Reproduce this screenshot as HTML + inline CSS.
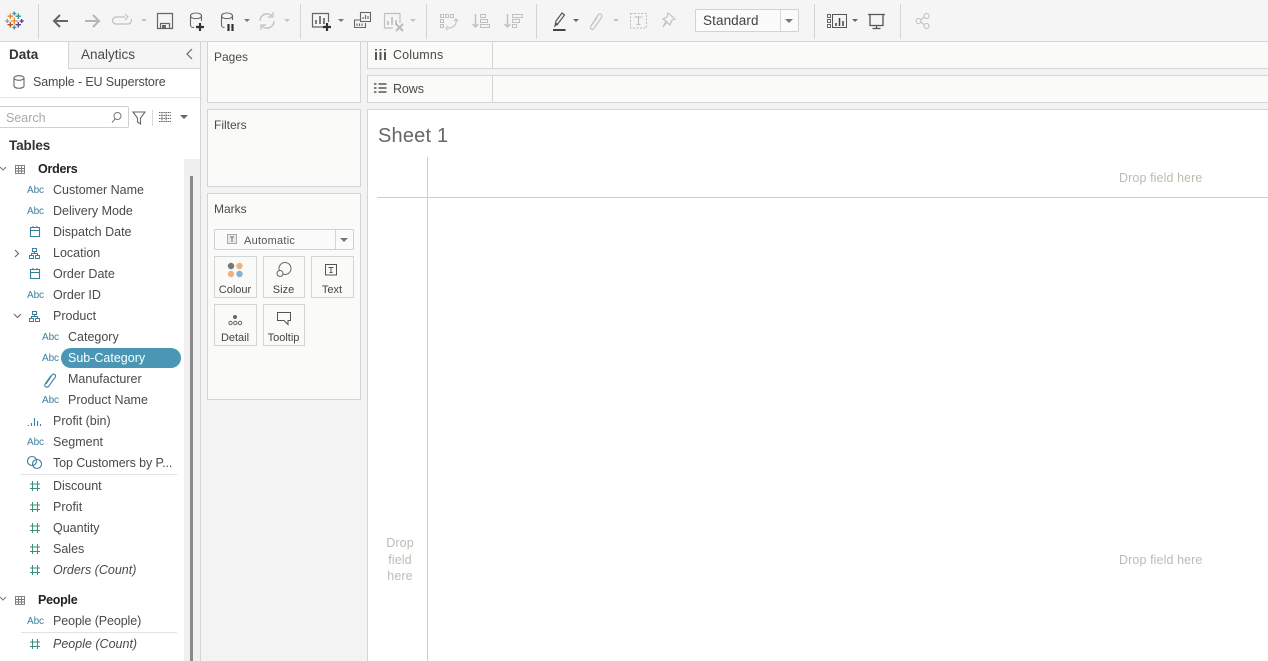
<!DOCTYPE html>
<html><head><meta charset="utf-8"><style>
html,body{margin:0;padding:0;width:1268px;height:661px;overflow:hidden;background:#f3f3f3;font-family:"Liberation Sans",sans-serif;color:#3f3f3f}
.a{position:absolute}
.t{position:absolute;font-size:12.5px;line-height:16px;white-space:nowrap;color:#4a4a4a;letter-spacing:0}
.b{font-weight:bold;color:#222;font-size:12.5px;letter-spacing:-.25px}
.abc{position:absolute;font-size:10px;line-height:12px;color:#3b7f9e;letter-spacing:-.1px;white-space:nowrap;top:0}
.p{position:absolute;background:#fafaf8;border:1px solid #d4d4d4;box-sizing:border-box}
.m{position:absolute;background:#fafaf8;border:1px solid #d4d4d4;box-sizing:border-box;width:43px;height:42px}
.m span{position:absolute;left:-1px;right:0;top:26px;text-align:center;font-size:11px;line-height:14px;color:#444}
.d{position:absolute;color:#bcbcb2;font-size:12.5px;line-height:16px;white-space:nowrap;letter-spacing:.1px}
</style></head><body>

<!-- toolbar -->
<div class="a" style="left:0;top:0;width:1268px;height:41px;background:#f5f5f5"></div>
<div class="a" style="left:0;top:41px;width:1268px;height:1px;background:#d6d6d6"></div>
<svg class="a" style="left:0;top:0" width="1268" height="41" fill="none">
<!-- logo -->
<g stroke-width="1.300">
<path d="M10.300 13.500v5.500M7.500 16.200h5.500" stroke="#e8862e"/>
<path d="M18.300 13.500v5.500M15.500 16.200h5.500" stroke="#2f9b9b"/>
<path d="M14.300 17.500v7M10.800 21h7" stroke="#e8862e"/>
<path d="M10.300 22v5.500M7.500 24.700h5.500" stroke="#b5541c"/>
<path d="M18.300 22v5.500M15.500 24.700h5.500" stroke="#5b3e8f"/>
<path d="M7.300 19v4M5.300 21h4" stroke="#8a97a8"/>
<path d="M21.700 19v4M19.700 21h4" stroke="#4a3f8f"/>
<path d="M14.300 25.500v4M12.300 27.500h4" stroke="#3d8fb0"/>
<path d="M14.300 11.500v4M12.300 13.500h4" stroke="#3d8fb0"/>
</g>
<!-- separators -->
<path d="M38.500 4v35M300.500 4v35M426.500 4v35M536.500 4v35M814.500 4v35M900.500 4v35" stroke="#d4d4d4"/>
<!-- back/forward -->
<path d="M68 21H54M60 15l-6 6 6 6" stroke="#666" stroke-width="2"/>
<path d="M85 21h14M93 15l6 6-6 6" stroke="#b5b5b5" stroke-width="2"/>
<path d="M125 17h-9a3.500 3.500 0 0 0 0 7h12a3.500 3.500 0 0 0 3-5M125 14l3 3-3 3" stroke="#c0c0c0" stroke-width="1.200"/>
<path d="M338 19h6l-3 3zM244 19h6l-3 3z" fill="#777"/>
<path d="M141 19h6l-3 3z M284 19h6l-3 3z M410 19h6l-3 3z" fill="#c4c4c4"/>
<!-- save -->
<path d="M157.500 13.500h15v15h-15zM160.500 28.500v-5h9v5" stroke="#666" stroke-width="1.200"/><rect x="162" y="25" width="4" height="3" fill="#666"/>
<!-- DS add -->
<path d="M190.500 16v9a2.500 2.500 0 0 0 2.500 2.500h1M201.500 16v5M190.500 16c0-4 11-4 11 0 0 3.500-11 3.500-11 0z" stroke="#666" stroke-width="1.100"/>
<path d="M200 23v8M196 27h8" stroke="#333" stroke-width="2.200"/>
<!-- DS pause -->
<path d="M221.500 16v9a2.500 2.500 0 0 0 2.500 2.500h.500M232.500 16v4M221.500 16c0-4 11-4 11 0 0 3.500-11 3.500-11 0z" stroke="#666" stroke-width="1.100"/>
<path d="M228.500 24v7M232.500 24v7" stroke="#333" stroke-width="2.200"/>
<!-- refresh -->
<path d="M260 21a7 7 0 0 1 12-5M274 21a7 7 0 0 1-12 5" stroke="#c0c0c0" stroke-width="1.400"/><path d="M273 12v5h-5M261 30v-5h5" stroke="#c0c0c0" stroke-width="1.200"/>
<!-- new sheet -->
<path d="M327 27h-14.500V13.500h16V22" stroke="#666" stroke-width="1.200"/><path d="M316 24v-4M320 24v-8M324 24v-6" stroke="#666" stroke-width="1.700"/>
<path d="M327 23v8M323 27h8" stroke="#333" stroke-width="2.200"/>
<!-- duplicate -->
<path d="M360 20h-5.500v7.500h11V23" stroke="#666" stroke-width="1.100"/><rect x="360.500" y="12.500" width="10" height="9" stroke="#666" stroke-width="1.100"/><path d="M363 19v-2M365.500 19v-4M368 19v-3M357 26v-2.500M359.500 26v-2.500M362 26v-2.500" stroke="#666" stroke-width="1.100"/>
<!-- clear -->
<path d="M400 23v-9.500h-15.500V28H393" stroke="#c0c0c0" stroke-width="1.200"/><path d="M388 25v-4M392 25v-8M396 25v-5" stroke="#bdbdbd" stroke-width="1.700"/><path d="M396 24l7 7M403 24l-7 7" stroke="#bbb" stroke-width="2"/>
<!-- swap -->
<g fill="none" stroke="#c0c0c0"><rect x="440.500" y="14.500" width="3" height="3"/><rect x="445.500" y="14.500" width="3" height="3"/><rect x="450.500" y="14.500" width="3" height="3"/><rect x="440.500" y="19.500" width="3" height="3"/><rect x="440.500" y="24.500" width="3" height="3"/><path d="M456 19c1 5-2 9-8 9M454 21l2-2 2 2M448 26l-2 2 2 2" stroke-width="1.100"/></g>
<!-- sort -->
<path d="M475.500 14v13M472.500 24l3 3 3-3" stroke="#bdbdbd" stroke-width="1.300"/><path d="M480.500 14.500h5v3h-5zM480.500 19.500h7v3h-7zM480.500 24.500h9v3h-9z" stroke="#c0c0c0"/>
<path d="M507.500 14v13M504.500 24l3 3 3-3" stroke="#bdbdbd" stroke-width="1.300"/><path d="M512.500 14.500h10v3h-10zM512.500 19.500h7v3h-7zM512.500 24.500h4v3h-4z" stroke="#c0c0c0"/>
<!-- highlighter -->
<path d="M555 26l1-5 6-8 2.500 2-6 8zM555.500 23l2.500 2" stroke="#555" stroke-width="1.200"/><path d="M553 30h12.500" stroke="#444" stroke-width="2"/>
<path d="M573 19h6l-3 3z" fill="#666"/><path d="M613 19h6l-3 3z" fill="#c4c4c4"/>
<!-- clip -->
<path d="M591 26l7-11c2-2.500 5 0 3.500 2.500l-8 11.500c-1.500 1.500-4-.5-2.800-2.500l6.800-9.500" stroke="#c4c4c4" stroke-width="1.200"/>
<!-- T box -->
<rect x="630.500" y="13.500" width="16" height="14.500" stroke="#bbb" stroke-dasharray="2 1.500"/><path d="M635 17.500v-.500h7v.500M638.500 17v7M636.500 24.500h4" stroke="#bbb"/>
<!-- pin -->
<path d="M668 13l7 6-3 1-2 5-3-3-4 5 3-6-3-2 4-2z" stroke="#c0c0c0" stroke-width="1.100"/>
<!-- standard box -->
<rect x="695.500" y="9.500" width="103" height="22" fill="#fbfbfb" stroke="#d2d2d2" rx="1"/>
<path d="M780.500 10v21" stroke="#d8d8d8"/><path d="M785 19h8l-4 4z" fill="#777"/>
<!-- show me -->
<path d="M827.500 14.500h3v3h-3zM827.500 19.500h3v3h-3zM827.500 24.500h3v3h-3z" stroke="#666"/><rect x="832.500" y="14.500" width="14" height="13" stroke="#555"/><path d="M836 26v-3M839.500 26v-8M843 26v-5" stroke="#444" stroke-width="1.500"/>
<path d="M852 19h6l-3 3z" fill="#666"/>
<!-- presentation -->
<path d="M868 14.500h17M870 15v10.500h13V15M876.500 25.500v3M872.500 28.500h8" stroke="#555" stroke-width="1.300"/>
<!-- share -->
<g stroke="#bdbdbd" stroke-width="1"><circle cx="926.500" cy="16" r="2.500"/><circle cx="918.500" cy="21" r="2.500"/><circle cx="926.500" cy="26" r="2.500"/><path d="M920.700 19.700l3.600-2.300M920.700 22.300l3.600 2.300"/></g>
</svg>
<div class="t" style="left:703px;top:13px;font-size:13.500px;letter-spacing:.1px;color:#444">Standard</div>

<!-- data pane -->
<div class="a" style="left:0;top:42px;width:200px;height:619px;background:#fff"></div>
<div class="a" style="left:200px;top:42px;width:1px;height:619px;background:#d4d4d4"></div>
<div class="a" style="left:69px;top:42px;width:131px;height:26px;background:#f5f5f5;border-bottom:1px solid #d4d4d4"></div>
<div class="a" style="left:68px;top:42px;width:1px;height:27px;background:#d4d4d4"></div>
<div class="t" style="left:9px;top:47px;font-size:13.500px;font-weight:bold;color:#333">Data</div>
<div class="t" style="left:81px;top:47px;font-size:13.500px">Analytics</div>
<svg class="a" style="left:184px;top:47px" width="12" height="14" fill="none"><path d="M8 2L3 7l5 5" stroke="#666" stroke-width="1.200"/></svg>
<svg class="a" style="left:12px;top:74px" width="14" height="16" fill="none" stroke="#666" stroke-width="1.100"><path d="M2 4v8c0 3 10 3 10 0V4"/><ellipse cx="7" cy="4" rx="5" ry="2.300"/></svg>
<div class="t" style="left:33px;top:74px;letter-spacing:-.13px">Sample - EU Superstore</div>
<div class="a" style="left:0;top:97px;width:200px;height:1px;background:#e4e4e4"></div>
<div class="a" style="left:-2px;top:106px;width:131px;height:22px;border:1px solid #d0d0d0;box-sizing:border-box;border-radius:2px;background:#fff"></div>
<div class="t" style="left:6px;top:110px;color:#aaa">Search</div>
<svg class="a" style="left:108px;top:109px" width="100" height="18" fill="none"><circle cx="9.500" cy="7" r="3.500" stroke="#777"/><path d="M7 10l-3 3.500" stroke="#777"/>
<path d="M25 3h12l-4.500 6v6l-3-2V9z" stroke="#666" stroke-width="1.100"/><path d="M44.500 1v16" stroke="#d8d8d8"/>
<path d="M51 3.500h12M51 6.500h12M51 9.500h12M51 12.500h12M54 3v10M58 3v10" stroke="#666" stroke-width=".9" stroke-dasharray="1.500 .7"/><path d="M72 6h8l-4 4z" fill="#666"/></svg>
<div class="t b" style="left:9px;top:138px;font-size:13.500px;color:#333;letter-spacing:-.1px">Tables</div>
<div class="a" style="left:184px;top:159px;width:16px;height:502px;background:#f0f0f0"></div>
<div class="a" style="left:190px;top:176px;width:3px;height:485px;background:#8a8a8a"></div>

<svg class="a" style="left:0;top:160px" width="60" height="500" fill="none">
<g stroke="#777"><path d="M0 7l3 3 3-3" /><path d="M0 437l3 3 3-3"/></g>
<g stroke="#777" stroke-width=".9"><rect x="15.500" y="5.500" width="9" height="8"/><path d="M15 8.500h10M15 11h10M18.500 6v7M21.500 6v7"/><rect x="15.500" y="436.500" width="9" height="8"/><path d="M15 439.500h10M15 442h10M18.500 437v7M21.500 437v7"/></g>
<!-- calendar -->
<g stroke="#3b7f9e" stroke-width="1.100"><path d="M30.500 67.500h9v9h-9zM30.500 70.500h9M33 66v2M37 66v2"/><path d="M30.500 109.500h9v9h-9zM30.500 112.500h9M33 108v2M37 108v2"/></g>
<!-- location hierarchy -->
<g stroke="#3b7f9e"><path d="M32.500 88.500h4v3h-4zM29.500 95.500h4v3h-4zM35.500 95.500h4v3h-4zM34.500 91.500v2h-3v2M34.500 93.500h3v2"/>
<path d="M32.500 151.500h4v3h-4zM29.500 158.500h4v3h-4zM35.500 158.500h4v3h-4zM34.500 154.500v2h-3v2M34.500 156.500h3v2"/></g>
<path d="M15 90l3.500 3.500L15 97" stroke="#666" stroke-width="1.100"/>
<path d="M14 154l3.500 3.500L21 154" stroke="#666" stroke-width="1.100"/>
<!-- clip -->
<path d="M46 224l6-9c1.800-2 4.500 0 3.200 2.200l-6.500 9c-1.500 2-4.700.5-3.700-2l6-8.500" stroke="#3b7f9e" stroke-width="1.100"/>
<!-- bin -->
<path d="M28.500 266v-1M31.500 266v-3M34.500 266v-8M37.500 266v-5M40.500 266v-2" stroke="#3b7f9e" stroke-width="1.100"/>
<!-- set -->
<g stroke="#3b7f9e" stroke-width="1.100"><circle cx="32" cy="301" r="4.500"/><circle cx="37" cy="304" r="4.500"/></g>
<!-- measures -->
<g stroke="#3f8f80" stroke-width="1.100">
<path d="M32.500 321v10M37.500 321v10M30 324h10M30 328.500h10"/>
<path d="M32.500 342v10M37.500 342v10M30 345h10M30 349.500h10"/>
<path d="M32.500 363v10M37.500 363v10M30 366h10M30 370.500h10"/>
<path d="M32.500 384v10M37.500 384v10M30 387h10M30 391.500h10"/>
<path d="M32.500 405v10M37.500 405v10M30 408h10M30 412.500h10"/>
<path d="M32.500 479v10M37.500 479v10M30 482h10M30 486.500h10"/>
</g>
</svg>

<div class="t b" style="left:38px;top:161px">Orders</div>
<div class="abc" style="left:27px;top:185px">Abc</div><div class="t" style="left:53px;top:182px">Customer Name</div>
<div class="abc" style="left:27px;top:206px">Abc</div><div class="t" style="left:53px;top:203px">Delivery Mode</div>
<div class="t" style="left:53px;top:224px">Dispatch Date</div>
<div class="t" style="left:53px;top:245px">Location</div>
<div class="t" style="left:53px;top:266px">Order Date</div>
<div class="abc" style="left:27px;top:290px">Abc</div><div class="t" style="left:53px;top:287px">Order ID</div>
<div class="t" style="left:53px;top:308px">Product</div>
<div class="abc" style="left:42px;top:332px">Abc</div><div class="t" style="left:68px;top:329px">Category</div>
<div class="abc" style="left:42px;top:353px">Abc</div>
<div class="a" style="left:61px;top:348px;width:120px;height:20px;border-radius:10px;background:#4a97b5"></div>
<div class="t" style="left:68px;top:350px;color:#fff">Sub-Category</div>
<div class="t" style="left:68px;top:371px">Manufacturer</div>
<div class="abc" style="left:42px;top:395px">Abc</div><div class="t" style="left:68px;top:392px">Product Name</div>
<div class="t" style="left:53px;top:413px">Profit (bin)</div>
<div class="abc" style="left:27px;top:437px">Abc</div><div class="t" style="left:53px;top:434px">Segment</div>
<div class="t" style="left:53px;top:455px;letter-spacing:-.1px">Top Customers by P...</div>
<div class="a" style="left:21px;top:474px;width:156px;height:1px;background:#e2e2e2"></div>
<div class="t" style="left:53px;top:478px">Discount</div>
<div class="t" style="left:53px;top:499px">Profit</div>
<div class="t" style="left:53px;top:520px">Quantity</div>
<div class="t" style="left:53px;top:541px">Sales</div>
<div class="t" style="left:53px;top:562px;font-style:italic">Orders (Count)</div>
<div class="t b" style="left:38px;top:592px">People</div>
<div class="abc" style="left:27px;top:616px">Abc</div><div class="t" style="left:53px;top:613px;letter-spacing:-.1px">People (People)</div>
<div class="a" style="left:21px;top:632px;width:156px;height:1px;background:#e2e2e2"></div>
<div class="t" style="left:53px;top:636px;font-style:italic">People (Count)</div>

<!-- shelves -->
<div class="p" style="left:207px;top:41px;width:154px;height:62px"></div>
<div class="t" style="left:214px;top:49px;font-size:12px">Pages</div>
<div class="p" style="left:207px;top:109px;width:154px;height:78px"></div>
<div class="t" style="left:214px;top:117px;font-size:12px">Filters</div>
<div class="p" style="left:207px;top:193px;width:154px;height:207px"></div>
<div class="t" style="left:214px;top:201px;font-size:12px">Marks</div>

<div class="a" style="left:214px;top:229px;width:140px;height:21px;border:1px solid #d0d0d0;box-sizing:border-box;border-radius:2px;background:#fbfbfb"></div>
<div class="a" style="left:335px;top:230px;width:1px;height:19px;background:#d4d4d4"></div>
<svg class="a" style="left:225px;top:232px" width="125" height="16" fill="none"><rect x="2.500" y="2.500" width="9" height="9" fill="#e8e8e8" stroke="#aaa"/><path d="M5 5h4M7 5v5" stroke="#777"/><path d="M115 6h8l-4 4z" fill="#777"/></svg>
<div class="t" style="left:244px;top:233px;font-size:11px;letter-spacing:.25px;color:#555">Automatic</div>

<div class="m" style="left:214px;top:256px"><span>Colour</span></div>
<div class="m" style="left:263px;top:256px;width:42px"><span>Size</span></div>
<div class="m" style="left:311px;top:256px"><span>Text</span></div>
<div class="m" style="left:214px;top:304px"><span>Detail</span></div>
<div class="m" style="left:263px;top:304px;width:42px"><span>Tooltip</span></div>
<svg class="a" style="left:214px;top:256px" width="140" height="90" fill="none">
<circle cx="17" cy="10" r="3.200" fill="#777"/><circle cx="25.500" cy="10" r="3.200" fill="#eeb27c"/><circle cx="17" cy="18" r="3.200" fill="#eeb27c"/><circle cx="25.500" cy="18" r="3.200" fill="#7fb3d8"/>
<circle cx="71" cy="12.500" r="6" stroke="#666"/><circle cx="66" cy="17.500" r="3" fill="#fafaf8" stroke="#666"/>
<rect x="111.500" y="8.500" width="11" height="10.500" stroke="#555"/><path d="M114.500 11.500h5M117 11.500v5M115.500 16.500h3" stroke="#555"/>
<circle cx="21" cy="61" r="2" fill="#666"/><circle cx="16.500" cy="67" r="1.700" stroke="#666"/><circle cx="21.300" cy="67" r="1.700" stroke="#666"/><circle cx="26" cy="67" r="1.700" stroke="#666"/>
<path d="M63.500 56.500h13v8h-2.500v4l-4-4h-6.500z" stroke="#555"/>
</svg>

<div class="p" style="left:367px;top:41px;width:901px;height:28px;border-right:0"></div>
<div class="a" style="left:492px;top:41px;width:1px;height:28px;background:#d4d4d4"></div>
<div class="p" style="left:367px;top:75px;width:901px;height:28px;border-right:0"></div>
<div class="a" style="left:492px;top:75px;width:1px;height:28px;background:#d4d4d4"></div>
<svg class="a" style="left:372px;top:46px" width="16" height="50" fill="none" stroke="#555"><path d="M4 6v8M8.500 6v8M13 6v8" stroke-width="2"/><path d="M3 3.800h2M7.500 3.800h2M12 3.800h2" stroke-width="1.500"/>
<path d="M6.500 38h8M6.500 42h8M6.500 46h8M2 38h2.500M2 42h2.500M2 46h2.500" stroke-width="1.600"/></svg>
<div class="t" style="left:393px;top:47px;letter-spacing:.15px">Columns</div>
<div class="t" style="left:393px;top:81px;letter-spacing:-.1px">Rows</div>

<!-- sheet -->
<div class="a" style="left:367px;top:109px;width:901px;height:552px;background:#fff;border:1px solid #d4d4d4;border-right:0;border-bottom:0;box-sizing:border-box"></div>
<div class="t" style="left:378px;top:123px;font-size:20px;line-height:26px;color:#666;letter-spacing:.2px">Sheet 1</div>
<div class="a" style="left:427px;top:157px;width:1px;height:504px;background:#cfcfcf"></div>
<div class="a" style="left:377px;top:197px;width:891px;height:1px;background:#cfcfcf"></div>
<div class="d" style="left:1119px;top:170px">Drop field here</div>
<div class="d" style="left:1119px;top:552px">Drop field here</div>
<div class="d" style="left:372px;top:535px;width:56px;text-align:center">Drop</div>
<div class="d" style="left:372px;top:552px;width:56px;text-align:center">field</div>
<div class="d" style="left:372px;top:568px;width:56px;text-align:center">here</div>
</body></html>
